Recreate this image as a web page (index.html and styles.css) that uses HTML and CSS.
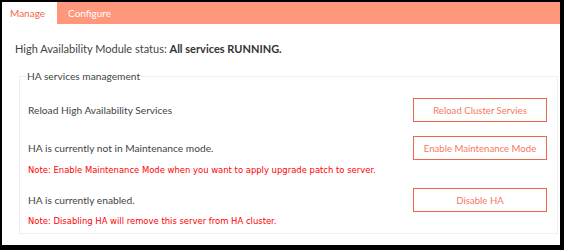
FILE: index.html
```html
<!DOCTYPE html>
<html lang="en">
<head>
    <meta charset="UTF-8">
    <title>HA</title>
    <link rel="stylesheet" href="styles.css">
</head>
<body>
<div class="frame">
    <ul class="tabGroup">
        <li class="tab selectedTab">Manage</li>
        <li class="tab">Configure</li>
    </ul>
    <div class="panel">
        <p class="status">High Availability Module status: <b>All services RUNNING.</b></p>
        <fieldset class="haBox">
            <legend>HA services management</legend>
            <div class="row firstRow">
                <span class="label">Reload High Availability Services</span>
                <button class="btn">Reload Cluster Servies</button>
            </div>
            <div class="row">
                <span class="label">HA is currently not in Maintenance mode.</span>
                <button class="btn">Enable Maintenance Mode</button>
            </div>
            <p class="note">Note: Enable Maintenance Mode when you want to apply upgrade patch to server.</p>
            <div class="row rowGap">
                <span class="label">HA is currently enabled.</span>
                <button class="btn">Disable HA</button>
            </div>
            <p class="note">Note: Disabling HA will remove this server from HA cluster.</p>
        </fieldset>
    </div>
</div>
</body>
</html>
```
FILE: styles.css
```css
*{ padding: 0; margin: 0; box-sizing: border-box;}
html, body{ height: 100%;}
body{ background: #000; font-family: Lato, "Open Sans", sans-serif; font-size: 10.2px; color: #444;}
.frame{ background: #fff; margin: 2px 4px 0 2px; height: 243px;}
ul.tabGroup{ list-style: none; display: flex; height: 22px; background: #ff977c;}
li.tab{ padding: 0 8px 0 8px; line-height: 22px; color: #fff; font-size: 10px;}
li.tab + li.tab{ padding-left: 11px;}
li.selectedTab{ background: #fff; color: #f4684a; padding-right: 12px;}
.panel{ padding: 17px 0 0 13px;}
.status{ line-height: 16px; font-size: 11px;}
.status b{ color: #333;}
fieldset.haBox{ margin: 12px 2px 0 4px; border: 1px solid #efefef; padding: 0 10px 0 8px; height: 165px;}
fieldset.haBox legend{ padding: 0 1px; margin-left: -2px; color: #444; line-height: 14px;}
.row{ display: flex; justify-content: space-between; align-items: center; height: 24px; margin-top: 14px;}
.firstRow{ margin-top: 15px;}
.rowGap{ margin-top: 11px;}
.btn{ width: 134px; height: 24px; background: #fff; border: 1px solid #f2664a; color: #f47a5e; font-family: inherit; font-size: 9.6px;}
.note{ color: #f00; font-family: "DejaVu Sans Condensed", "Liberation Sans", sans-serif; font-size: 9.4px; margin-top: 3px; line-height: 14px;}
.note:last-child{ margin-top: 2px;}
```
